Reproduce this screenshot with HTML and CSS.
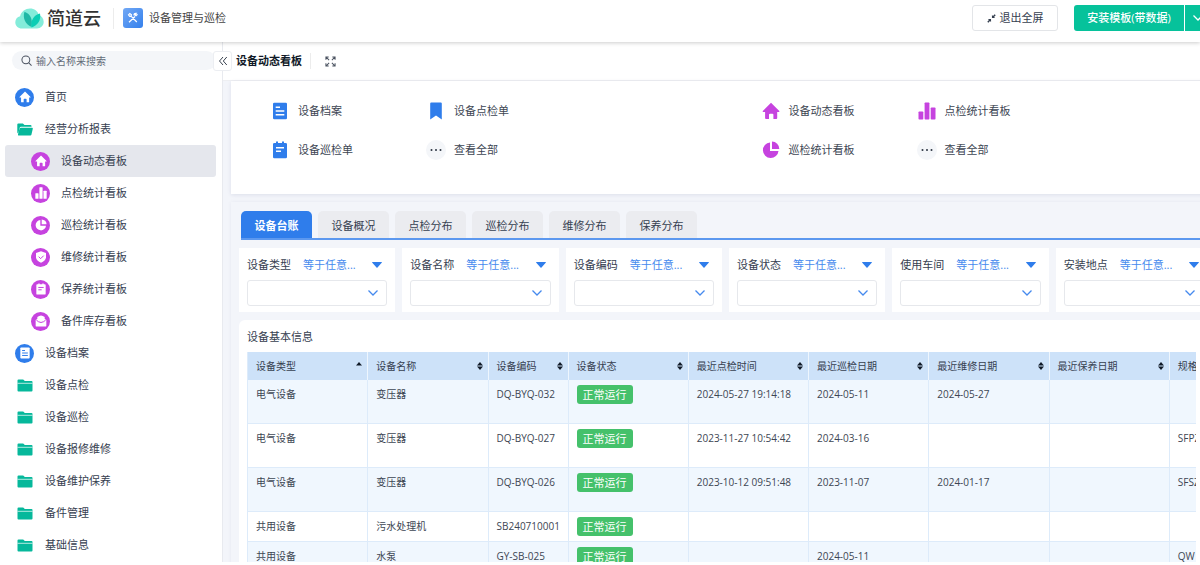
FILE: index.html
```html
<!DOCTYPE html>
<html lang="zh-CN">
<head>
<meta charset="utf-8">
<title>设备管理与巡检</title>
<link rel="stylesheet" href="styles.css">
</head>
<body>
<svg class="sprite" aria-hidden="true">
  <symbol id="home" viewBox="0 0 18 18"><path d="M9 .8 17.3 9q.5.900-.5.900h-1.600v6.200q0 .9-.9.900h-2.900v-4.300q0-1-1-1H8q-1 0-1 1V17H4q-.9 0-.9-.9V9.900H1.300q-1 0-.5-.9z"/></symbol>
  <symbol id="bars" viewBox="0 0 18 18"><rect x=".5" y="9.500" width="4.800" height="8" rx=".8"/><rect x="6.600" y=".5" width="4.800" height="17" rx=".8"/><rect x="12.700" y="5.500" width="4.800" height="12" rx=".8"/></symbol>
  <symbol id="pie" viewBox="0 0 18 18"><path d="M8 1.500V10h8.500A7.800 7.800 0 1 1 8 1.500z"/><path d="M10 .6A7.400 7.400 0 0 1 17.300 8H10z"/></symbol>
  <symbol id="shield" viewBox="0 0 18 18"><path d="M9 .5 16.500 3v6.500c0 4-3.500 6.500-7.500 8-4-1.500-7.500-4-7.500-8V3z"/><path class="cut" d="m5.500 8.500 3 3 4.500-4.500"/></symbol>
  <symbol id="note" viewBox="0 0 18 18"><path d="M3.500 2H5V.6h2V2h4V.6h2V2h1.500q1.500 0 1.500 1v13q0 1.300-1.300 1.300H3.300Q2 17.300 2 16V3q0-1 1.500-1z"/><path class="cut" d="M5 6.700h8M5 10.200h5"/></symbol>
  <symbol id="mail" viewBox="0 0 18 18"><path d="M1 7.500 3.500 5.500V3Q9-1.500 14.500 3v2.500L17 7.500V16q0 1.300-1.300 1.300H2.300Q1 17.300 1 16z"/><path class="cut" d="M2 7.500 5 10q4 2.500 8 0l3-2.500"/></symbol>
  <symbol id="doc" viewBox="0 0 18 18"><rect x="2" y=".8" width="14" height="16.400" rx="1.200"/><path class="cut" d="M4.700 5.300H9M4.700 9h8.600M4.700 12.700h8.600"/></symbol>
  <symbol id="mark" viewBox="0 0 18 18"><path d="M4.200.6h9.600q1 0 1 1v15.800L9 13.500l-5.800 3.900V1.600q0-1 1-1z"/></symbol>
  <symbol id="folder" viewBox="0 0 16 13"><path d="M.5 1.500Q.5.500 1.500.5h4.700l1.600 1.400h6.700q1 0 1 1v8.600q0 1-1 1h-13q-1 0-1-1z"/><path class="seam" d="M.5 4.300h15"/></symbol>
  <symbol id="folder-open" viewBox="0 0 16 13"><path d="M.3 9.500V1.500Q.3.500 1.300.5h4.600l1.600 1.400h6q1 0 1 1v.8H4q-1 0-1.300 1l-1.500 6z"/><path d="M4 4.700h11q1 0 .8 1l-1.400 6q-.2.800-1.100.800H1.600q-.9 0-.6-.9l1.600-6q.3-.9 1.400-.9z"/></symbol>
  <symbol id="dots" viewBox="0 0 18 18"><circle cx="4.500" cy="9" r="1"/><circle cx="9" cy="9" r="1"/><circle cx="13.500" cy="9" r="1"/></symbol>
  <symbol id="down" viewBox="0 0 12 8"><path d="m1.500 1.500 4.500 4.500 4.500-4.500"/></symbol>
  <symbol id="caret" viewBox="0 0 10 6"><path d="M.5 0h9q.8 0 .2.700L5.500 5.600q-.5.500-1 0L.3.700Q-.3 0 .5 0z"/></symbol>
  <symbol id="sort" viewBox="0 0 6 8"><path d="M3 0 6 3.500H0z"/><path d="M0 4.500h6L3 8z"/></symbol>
  <symbol id="sort-up" viewBox="0 0 6 8"><path d="M3 0 6 3.500H0z"/></symbol>
</svg>

<header class="topbar">
  <a class="brand" href="#">
    <svg class="brand-mark" viewBox="0 0 29 21" aria-hidden="true">
      <path fill="#84ecda" d="M7 20.500C3 20.500.3 17.500.3 14.200c0-3 2-5.400 4.800-6C6.200 3.500 10.500.5 15 .5c4.400 0 7.800 2.500 8.800 6.500 2.800.9 4.900 3.600 4.900 6.800 0 3.800-2.900 6.700-6.700 6.700z"/>
      <path fill="#1fb8a6" d="M9.500 3.800c5.500 2.200 8.500 6.500 7 15.200C10 16 7.500 9.800 9.500 3.800z"/>
      <path fill="#0bcdb4" d="M25 5.500c1.300 6.500-2 11.800-8.500 14C15.300 12.500 18.800 7 25 5.500z"/>
    </svg>
    <span>简道云</span>
  </a>
  <div class="app-name">
    <span class="app-icon"><svg viewBox="0 0 12 12" aria-hidden="true"><path d="M2 10.200 8 4.500M3.800 3.800l6 6.200M1.500 2.800l1.300-1.300 1.600 1.200-.3 1.500-1.400.1zM10.500 2.200 9 3.600 8 2.800 9.200 1.300q-2.400-.3-2.200 2.200"/></svg></span>
    <span>设备管理与巡检</span>
  </div>
  <div class="actions">
    <button class="btn-exit" type="button"><svg viewBox="0 0 10 10" aria-hidden="true"><path d="M5.500 1v3.500H9L7.800 3.400 9.700 1.500 8.500.3 6.700 2.200zM4.500 9V5.500H1l1.200 1.100L.3 8.500l1.200 1.200 1.800-1.900z"/></svg>退出全屏</button>
    <div class="split">
      <button class="btn-install" type="button">安装模板(带数据)</button>
      <button class="btn-more" type="button" aria-label="更多"><svg class="line" aria-hidden="true"><use href="#down"/></svg></button>
    </div>
  </div>
</header>

<div class="layout">
  <aside class="sidebar">
    <label class="search">
      <svg viewBox="0 0 12 12" aria-hidden="true"><circle cx="5.300" cy="5.300" r="4.300"/><path d="m8.500 8.500 3 3"/></svg>
      <input type="text" placeholder="输入名称来搜索" aria-label="输入名称来搜索">
    </label>
    <button class="collapse" type="button" aria-label="收起"><svg viewBox="0 0 10 10" aria-hidden="true"><path d="M5 1 1.500 5 5 9M8.800 1 5.300 5l3.500 4"/></svg></button>
    <nav>
      <a href="#"><span class="disc blue"><svg><use href="#home"/></svg></span>首页</a>
      <a href="#"><svg class="folder"><use href="#folder-open"/></svg>经营分析报表</a>
      <a class="sub active" href="#"><span class="disc"><svg><use href="#home"/></svg></span>设备动态看板</a>
      <a class="sub" href="#"><span class="disc"><svg><use href="#bars"/></svg></span>点检统计看板</a>
      <a class="sub" href="#"><span class="disc"><svg><use href="#pie"/></svg></span>巡检统计看板</a>
      <a class="sub" href="#"><span class="disc"><svg><use href="#shield"/></svg></span>维修统计看板</a>
      <a class="sub" href="#"><span class="disc"><svg><use href="#note"/></svg></span>保养统计看板</a>
      <a class="sub" href="#"><span class="disc"><svg><use href="#mail"/></svg></span>备件库存看板</a>
      <a href="#"><span class="disc blue"><svg><use href="#doc"/></svg></span>设备档案</a>
      <a href="#"><svg class="folder"><use href="#folder"/></svg>设备点检</a>
      <a href="#"><svg class="folder"><use href="#folder"/></svg>设备巡检</a>
      <a href="#"><svg class="folder"><use href="#folder"/></svg>设备报修维修</a>
      <a href="#"><svg class="folder"><use href="#folder"/></svg>设备维护保养</a>
      <a href="#"><svg class="folder"><use href="#folder"/></svg>备件管理</a>
      <a href="#"><svg class="folder"><use href="#folder"/></svg>基础信息</a>
    </nav>
  </aside>

  <main>
    <div class="titlebar">
      <h1>设备动态看板</h1>
      <button class="expand" type="button" aria-label="全屏"><svg viewBox="0 0 12 12" aria-hidden="true"><path d="M1 4V1h3M1 1l3.500 3.500M8 1h3v3M11 1 7.500 4.500M1 8v3h3M1 11l3.500-3.500M8 11h3V8M11 11 7.500 7.500"/></svg></button>
    </div>

    <div class="board">
      <section class="shortcuts">
        <div class="group blue">
          <a href="#"><span><svg><use href="#doc"/></svg></span>设备档案</a>
          <a href="#"><span><svg><use href="#mark"/></svg></span>设备点检单</a>
          <a href="#"><span><svg><use href="#note"/></svg></span>设备巡检单</a>
          <a href="#"><span class="all"><svg><use href="#dots"/></svg></span>查看全部</a>
        </div>
        <div class="group">
          <a href="#"><span><svg><use href="#home"/></svg></span>设备动态看板</a>
          <a href="#"><span><svg><use href="#bars"/></svg></span>点检统计看板</a>
          <a href="#"><span><svg><use href="#pie"/></svg></span>巡检统计看板</a>
          <a href="#"><span class="all"><svg><use href="#dots"/></svg></span>查看全部</a>
        </div>
      </section>

      <section class="ledger">
        <div class="tabs" role="tablist">
          <button class="on" type="button" role="tab" aria-selected="true">设备台账</button>
          <button type="button" role="tab">设备概况</button>
          <button type="button" role="tab">点检分布</button>
          <button type="button" role="tab">巡检分布</button>
          <button type="button" role="tab">维修分布</button>
          <button type="button" role="tab">保养分布</button>
        </div>

        <div class="filters">
          <div class="filter"><div class="cond"><label for="f1">设备类型</label><button type="button">等于任意...<svg><use href="#caret"/></svg></button></div><div class="pick"><select id="f1"><option></option></select><svg class="line"><use href="#down"/></svg></div></div>
          <div class="filter"><div class="cond"><label for="f2">设备名称</label><button type="button">等于任意...<svg><use href="#caret"/></svg></button></div><div class="pick"><select id="f2"><option></option></select><svg class="line"><use href="#down"/></svg></div></div>
          <div class="filter"><div class="cond"><label for="f3">设备编码</label><button type="button">等于任意...<svg><use href="#caret"/></svg></button></div><div class="pick"><select id="f3"><option></option></select><svg class="line"><use href="#down"/></svg></div></div>
          <div class="filter"><div class="cond"><label for="f4">设备状态</label><button type="button">等于任意...<svg><use href="#caret"/></svg></button></div><div class="pick"><select id="f4"><option></option></select><svg class="line"><use href="#down"/></svg></div></div>
          <div class="filter"><div class="cond"><label for="f5">使用车间</label><button type="button">等于任意...<svg><use href="#caret"/></svg></button></div><div class="pick"><select id="f5"><option></option></select><svg class="line"><use href="#down"/></svg></div></div>
          <div class="filter"><div class="cond"><label for="f6">安装地点</label><button type="button">等于任意...<svg><use href="#caret"/></svg></button></div><div class="pick"><select id="f6"><option></option></select><svg class="line"><use href="#down"/></svg></div></div>
        </div>

        <div class="card">
          <h2>设备基本信息</h2>
          <div class="scroller">
            <table>
              <colgroup><col><col><col class="code"><col><col><col><col><col><col></colgroup>
              <thead>
                <tr>
                  <th><div>设备类型<svg><use href="#sort-up"/></svg></div></th>
                  <th><div>设备名称<svg><use href="#sort"/></svg></div></th>
                  <th><div>设备编码<svg><use href="#sort"/></svg></div></th>
                  <th><div>设备状态<svg><use href="#sort"/></svg></div></th>
                  <th><div>最近点检时间<svg><use href="#sort"/></svg></div></th>
                  <th><div>最近巡检日期<svg><use href="#sort"/></svg></div></th>
                  <th><div>最近维修日期<svg><use href="#sort"/></svg></div></th>
                  <th><div>最近保养日期<svg><use href="#sort"/></svg></div></th>
                  <th><div>规格</div></th>
                </tr>
              </thead>
              <tbody>
                <tr class="tall"><td>电气设备</td><td>变压器</td><td>DQ-BYQ-032</td><td><span class="badge">正常运行</span></td><td>2024-05-27 19:14:18</td><td>2024-05-11</td><td>2024-05-27</td><td></td><td></td></tr>
                <tr class="tall"><td>电气设备</td><td>变压器</td><td>DQ-BYQ-027</td><td><span class="badge">正常运行</span></td><td>2023-11-27 10:54:42</td><td>2024-03-16</td><td></td><td></td><td>SFPZ</td></tr>
                <tr class="tall"><td>电气设备</td><td>变压器</td><td>DQ-BYQ-026</td><td><span class="badge">正常运行</span></td><td>2023-10-12 09:51:48</td><td>2023-11-07</td><td>2024-01-17</td><td></td><td>SFSZ</td></tr>
                <tr><td>共用设备</td><td>污水处理机</td><td>SB240710001</td><td><span class="badge">正常运行</span></td><td></td><td></td><td></td><td></td><td></td></tr>
                <tr><td>共用设备</td><td>水泵</td><td>GY-SB-025</td><td><span class="badge">正常运行</span></td><td></td><td>2024-05-11</td><td></td><td></td><td>QW</td></tr>
              </tbody>
            </table>
          </div>
        </div>
      </section>
    </div>
  </main>
</div>
</body>
</html>
```

FILE: styles.css
```css
* { box-sizing: border-box; }

body {
  margin: 0;
  height: 100vh;
  padding-bottom: 3px;
  display: flex;
  flex-direction: column;
  overflow: hidden;
  background: #fff;
  color: #364050;
  font: 11px/16px "Open Sans", "Noto Sans CJK SC", sans-serif;
}

button, input, select { font: inherit; color: inherit; }
button { border: 0; padding: 0; background: none; white-space: nowrap; }
a { color: inherit; text-decoration: none; }
svg { display: block; flex: none; fill: currentColor; }
h1, h2 { margin: 0; font-size: 11px; line-height: 16px; }

.sprite { position: absolute; width: 0; height: 0; }
.cut { fill: none; stroke: var(--cut, #fff); stroke-width: 1.5; }
.seam { stroke: #fff; stroke-width: 1; opacity: .7; }
.line { width: 12px; height: 8px; fill: none; stroke: currentColor; stroke-width: 1.3; }

/* Top bar */
.topbar {
  position: relative;
  z-index: 2;
  flex: none;
  display: flex;
  align-items: center;
  height: 42px;
  padding: 0 0 6px 15px;
  background: #fff;
  box-shadow: 0 1px 4px rgba(0, 0, 0, .2);
}
.brand {
  display: flex;
  align-items: center;
  gap: 3px;
  padding-right: 12px;
  border-right: 1px solid #ececec;
  color: #333;
  font-size: 18px;
  font-weight: 500;
  line-height: 20px;
}
.brand-mark { width: 29px; height: 21px; }
.app-name { display: flex; align-items: center; gap: 6px; padding-left: 9px; color: #444; }
.app-icon {
  display: grid;
  place-items: center;
  width: 20px;
  height: 20px;
  border-radius: 3px;
  background: linear-gradient(135deg, #72a8f5, #3480ec);
}
.app-icon svg { width: 12px; height: 12px; fill: none; stroke: #fff; stroke-width: 1.2; }
.actions { display: flex; gap: 16px; margin: 0 -10px 0 auto; }
.btn-exit {
  display: flex;
  align-items: center;
  justify-content: center;
  gap: 4px;
  width: 86px;
  height: 26px;
  border: 1px solid #e3e5e8;
  border-radius: 3px;
}
.btn-exit svg { width: 9px; height: 9px; }
.split { display: flex; gap: 1px; height: 26px; color: #fff; }
.btn-install { width: 110px; border-radius: 3px 0 0 3px; background: #06c29b; font-weight: 500; }
.btn-more { display: grid; place-items: center; width: 25px; background: #06c29b; }

.layout { flex: 1; min-height: 0; display: flex; }

/* Sidebar */
.sidebar {
  position: relative;
  z-index: 1;
  flex: none;
  width: 223px;
  padding: 9px 6px 0 5px;
  border-right: 1px solid #e8eaef;
}
.search {
  display: flex;
  align-items: center;
  gap: 4px;
  height: 19px;
  margin: 0 0 11px 7px;
  padding-left: 9px;
  border-radius: 10px;
  background: #f4f6f9;
}
.search svg { width: 11px; height: 11px; fill: none; stroke: #4a5260; stroke-width: 1.1; }
.search input { width: 160px; padding: 0; border: 0; outline: 0; background: none; font-size: 10px; }
.search input::placeholder { color: #626b78; opacity: 1; }
.collapse {
  position: absolute;
  top: 9px;
  right: -10px;
  display: grid;
  place-items: center;
  width: 19px;
  height: 20px;
  border: 1px solid #eceef2;
  border-radius: 3px;
  background: #fff;
}
.collapse svg { width: 10px; height: 10px; fill: none; stroke: #3a4350; }
nav a {
  display: flex;
  align-items: center;
  gap: 11px;
  height: 32px;
  padding-left: 10px;
  border-radius: 3px;
}
nav .sub { padding-left: 26px; }
nav .active { background: #e5e7ed; }
.disc {
  --cut: #c643df;
  display: grid;
  place-items: center;
  width: 19px;
  height: 19px;
  border-radius: 50%;
  background: #c643df;
  color: #fff;
}
.disc.blue { --cut: #2f7deb; background: #2f7deb; }
.disc svg { width: 12px; height: 12px; }
.folder { width: 16px; height: 13px; margin: 0 1px 0 2px; color: #06b89b; }

/* Page area */
main { flex: 1; min-width: 0; overflow: hidden; background: #f3f5fa; }
.titlebar {
  display: flex;
  align-items: center;
  height: 39px;
  padding-left: 13px;
  border-bottom: 1px solid #eeeff2;
  background: #fff;
}
.titlebar h1 { padding-right: 8px; border-right: 1px solid #ececec; color: #111a28; }
.expand { margin-left: 14px; }
.expand svg { width: 11px; height: 11px; fill: none; stroke: #4a5260; stroke-width: 1.1; }
/* The board is a little wider than the window, so it runs under the right edge */
.board { margin: 0 -12px 0 8px; }

.shortcuts {
  display: grid;
  grid-template-columns: 1fr 1fr;
  padding: 20px 0 34px;
  background: #fff;
  box-shadow: 0 1px 4px rgba(30, 40, 100, .1);
}
.group {
  display: grid;
  grid-template-columns: repeat(auto-fill, 156px);
  row-gap: 19px;
  padding-left: 39px;
  color: #3d4653;
}
.group a { display: flex; align-items: center; gap: 8px; }
.group span { display: grid; place-items: center; width: 20px; height: 20px; color: #c643df; }
.group.blue span { color: #2f7deb; }
.group .all, .group.blue .all { border-radius: 50%; background: #f4f6f9; color: #2c3542; }
.group svg { width: 18px; height: 18px; }

.ledger { margin-top: 8px; padding: 9px 0 0 8px; box-shadow: 0 0 4px rgba(30, 40, 100, .06); }
.tabs { display: flex; gap: 6px; margin-left: 2px; border-bottom: 2px solid #5c98ef; }
.tabs button { width: 71px; height: 27px; padding-top: 3px; border-radius: 5px 5px 0 0; background: #ebecf0; }
.tabs .on { background: #2f7deb; color: #fff; font-weight: 700; }

.filters { display: grid; grid-template-columns: repeat(6, 1fr); gap: 7px; margin-top: 8px; }
.filter { padding: 9px 8px 6px; background: #fff; }
.cond { display: flex; gap: 12px; height: 16px; margin-bottom: 7px; }
.cond button { flex: 1; display: flex; align-items: center; justify-content: space-between; padding-right: 5px; color: #468aee; }
.cond button svg { width: 10px; height: 6px; color: #2f7deb; }
.pick { position: relative; }
.pick select {
  display: block;
  width: 100%;
  height: 26px;
  border: 1px solid #e6e8ec;
  border-radius: 3px;
  background: #fff;
  appearance: none;
}
.pick svg { position: absolute; top: 9px; right: 8px; color: #468aee; pointer-events: none; }

.card { margin-top: 8px; padding: 9px 16px 0 8px; border-radius: 6px 0 0 0; background: #fff; }
.card h2 { margin-bottom: 7px; font-weight: 400; }
.scroller { overflow: hidden; }
table { width: 1043px; table-layout: fixed; border-spacing: 0; font-size: 10px; border-left: 1px solid #ddebfa; }
.code { width: 80px; }
th, td { padding: 5px 8px; text-align: left; vertical-align: top; white-space: nowrap; border-right: 1px solid #ddebfa; }
th { height: 28px; padding: 0 8px; vertical-align: middle; font-weight: 400; background: #cde2f9; border-color: #eef6fe; }
th div { display: flex; align-items: center; justify-content: space-between; margin-right: -3px; }
th svg { width: 6px; height: 8px; color: #111a28; }
td { height: 30px; line-height: 19px; color: #3d4653; border-bottom: 1px solid #ddebfa; }
.tall td { height: 44px; }
tbody tr:nth-child(odd) { background: #f0f7fe; }
.badge { display: block; width: fit-content; padding: 0 6px; border-radius: 3px; background: #45c16b; color: #fff; font-size: 11px; }
```
